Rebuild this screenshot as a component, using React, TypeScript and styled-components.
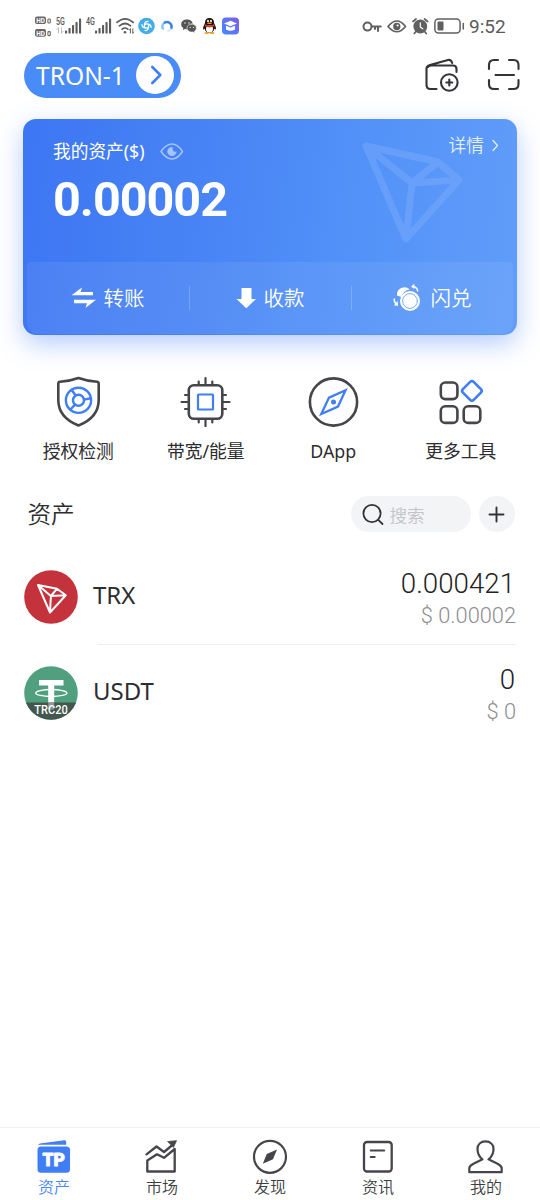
import React from 'react';
import styled, { createGlobalStyle } from 'styled-components';

const Global = createGlobalStyle`
  * { box-sizing: border-box; }
  body { margin: 0; background: #fff; }
  svg { display: block; flex: none; }
`;

const cjk = `"Noto Sans", "Noto Sans CJK SC", sans-serif`;
const digits = `Roboto, "Noto Sans CJK SC", sans-serif`;
const ink = '#45464a';
const blue = '#3f7ef5';

const Screen = styled.div`
  width: 540px;
  height: 1200px;
  display: flex;
  flex-direction: column;
  background: #fff;
  color: #2c2d30;
  font-family: ${cjk};
  font-weight: 350;
  overflow: hidden;
`;

const StatusBar = styled.div`
  height: 52px;
  padding: 0 35px 0 34px;
  display: flex;
  justify-content: space-between;
  align-items: center;
`;

const StatusGroup = styled.div<{ $gap: number }>`
  display: flex;
  align-items: center;
  gap: ${p => p.$gap}px;
`;

const Clock = styled.span`
  font: 400 19px/24px ${digits};
  margin-left: -1px;
  padding-top: 1px;
  color: #5a5a5a;
  width: 36px;
  white-space: nowrap;
`;

const Header = styled.header`
  height: 46px;
  padding: 0 19px 0 24px;
  display: flex;
  justify-content: space-between;
  align-items: center;
`;

const WalletPill = styled.button`
  width: 157px;
  height: 45px;
  border: 0;
  border-radius: 23px;
  background: #4a8cf7;
  padding: 0 7px 0 12px;
  display: flex;
  align-items: center;
  justify-content: space-between;
  color: #fff;
  font: 400 24.6px/43px "Noto Sans", sans-serif;
  white-space: nowrap;
`;

const HeaderIcons = styled.div`
  display: flex;
  align-items: center;
  gap: 27px;
`;

const Card = styled.section`
  margin: 21px 23px 0;
  height: 216px;
  flex: none;
  border-radius: 13px;
  background: linear-gradient(97deg, #3d76f3 0%, #4a86f5 42%, #5090f8 62%, #619df9 100%);
  box-shadow: 0 9px 26px rgba(84, 136, 246, 0.42);
  display: flex;
  flex-direction: column;
  justify-content: space-between;
  position: relative;
  color: #fff;
`;

const Watermark = styled.svg`
  position: absolute;
  left: 337px;
  top: 21px;
`;

const CardTop = styled.div`
  padding: 17px 18px 0 30px;
  display: flex;
  justify-content: space-between;
  align-items: flex-start;
`;

const Balance = styled.div`
  display: flex;
  flex-direction: column;
`;

const BalanceLabel = styled.div`
  height: 30px;
  display: flex;
  align-items: center;
  gap: 16px;
  font-size: 17.7px;
  font-weight: 400;
  line-height: 30px;
`;

const Amount = styled.div`
  font: 700 48.5px/58px ${digits};
  letter-spacing: -1px;
  margin-top: 5px;
`;

const Details = styled.div`
  display: flex;
  align-items: center;
  gap: 7px;
  font-size: 17.7px;
  line-height: 18px;
  opacity: 0.85;
`;

const Actions = styled.div`
  height: 72px;
  margin: 0 4px 1px;
  border-radius: 3px 3px 11px 11px;
  background: rgba(255, 255, 255, 0.07);
  display: grid;
  grid-template-columns: repeat(3, 1fr);
  align-items: center;
`;

const Action = styled.div<{ $gap: number }>`
  height: 24px;
  display: flex;
  align-items: center;
  justify-content: center;
  gap: ${p => p.$gap}px;
  padding-right: 1px;
  font-size: 20.5px;
  line-height: 24px;
  & + & { border-left: 1px solid rgba(255, 255, 255, 0.2); }
`;

const Tools = styled.section`
  margin: 41px 15.5px 0 14.5px;
  display: grid;
  grid-template-columns: repeat(4, 1fr);
`;

const Tool = styled.div`
  display: flex;
  flex-direction: column;
  align-items: center;
  gap: 11px;
  font-size: 17.8px;
  font-weight: 400;
  line-height: 26px;
`;

const AssetBar = styled.div`
  margin: 32px 25.5px 0 27.5px;
  height: 36px;
  display: flex;
  align-items: center;
  gap: 8px;
`;

const AssetTitle = styled.h2`
  margin: 0 auto 0 0;
  font-size: 23.6px;
  font-weight: 350;
  line-height: 36px;
`;

const Search = styled.div`
  width: 120px;
  height: 36px;
  border-radius: 18px;
  background: #f3f4f6;
  padding-left: 11px;
  display: flex;
  align-items: center;
  gap: 5px;
  font-size: 17.6px;
  color: #c3c4c7;
`;

const AddButton = styled.div`
  width: 36px;
  height: 36px;
  border-radius: 50%;
  background: #f3f4f6;
  display: grid;
  place-items: center;
`;

const AssetList = styled.div`
  margin-top: 17px;
  flex: 1;
`;

const AssetRow = styled.div`
  height: 96px;
  padding-left: 24px;
  display: flex;
  align-items: center;
  gap: 15px;
`;

const AssetName = styled.div`
  flex: 1;
  font-size: 24px;
  font-weight: 400;
  line-height: 30px;
  padding-bottom: 4px;
`;

const AssetValues = styled.div`
  padding: 3px 24px 0 0;
  display: flex;
  flex-direction: column;
  align-items: flex-end;
  font-family: ${digits};
`;

const Quantity = styled.div`
  font-size: 27.7px;
  line-height: 33px;
  padding-right: 1px;
  color: #222326;
`;

const Fiat = styled.div`
  font-size: 21.8px;
  line-height: 31px;
  color: #8c8d90;
`;

const Divider = styled.div`
  height: 1px;
  margin: -1px 24px 0 98px;
  background: #efeff0;
`;

const TabBar = styled.nav`
  height: 73px;
  border-top: 1px solid #efeff0;
  display: grid;
  grid-template-columns: repeat(5, 1fr);
`;

const Tab = styled.div<{ $active?: boolean }>`
  padding-top: 10px;
  display: flex;
  flex-direction: column;
  align-items: center;
  gap: 1px;
  font-size: 16px;
  line-height: 24px;
  color: ${p => (p.$active ? '#4a86f5' : '#3d3e42')};
`;

type DrawingProps = { box: [number, number, number, number]; color?: string; width?: number; children: React.ReactNode };

const Drawing = ({ box, color = ink, width = 2, children }: DrawingProps) => (
  <svg
    width={box[2]}
    height={box[3]}
    viewBox={box.join(' ')}
    fill="none"
    stroke={color}
    strokeWidth={width}
    strokeLinecap="round"
    strokeLinejoin="round"
  >
    {children}
  </svg>
);

const HdIcon = () => (
  <Drawing box={[34, 16, 17, 21]} color="none">
    {[0, 12.6].map(dy => (
      <g key={dy} transform={`translate(0 ${dy})`}>
        <rect x="35" y="16.5" width="11" height="7.6" rx="2" fill="#666" />
        <text x="36.3" y="23" fontSize="7.5" fontWeight="700" fontFamily="Roboto, sans-serif" fill="#fff" textLength="8.6" lengthAdjust="spacingAndGlyphs">HD</text>
        <rect x="47.9" y="19" width="2.4" height="4" rx=".8" stroke="#666" strokeWidth="1.1" />
      </g>
    ))}
  </Drawing>
);

const SignalIcon = ({ label, left, data }: { label: string; left: number; data?: boolean }) => (
  <Drawing box={[left, 16, 82 - left, 20]} color="none">
    <text x="56" y="25.2" fontSize="10" fontWeight="500" fontFamily="Roboto, sans-serif" fill="#555" textLength="8.8" lengthAdjust="spacingAndGlyphs">{label}</text>
    {data && <path d="M58.5 28v5m-1.6-3.4 1.6-1.6M61.5 28v5m1.6-1.6L61.5 33" stroke="#bbb" strokeWidth="1" />}
    {[3, 5.5, 8.5, 11.5, 15].map((h, i) => (
      <rect key={h} x={65 + i * 3.5} y={33.6 - h} width="2.1" height={h} rx=".6" fill="#5c5c5c" />
    ))}
  </Drawing>
);

const WifiIcon = () => (
  <Drawing box={[116, 17, 18, 18]} color="#5c5c5c" width={1.7}>
    <path d="M117 22.4q8.2-7.2 16.2 0M119.4 25.8q5.6-4.6 11.2 0M122.2 29.1q2.8-2.2 5.6 0" />
    <circle cx="125" cy="32.2" r="1.3" fill="#5c5c5c" stroke="none" />
    <path d="M130.4 29v4m-1-3 1-1M132.8 29v4m1-1-1 1" strokeWidth="1" />
  </Drawing>
);

const SwirlAppIcon = () => (
  <Drawing box={[138, 17, 17, 18]} color="#fff" width={1.2}>
    <circle cx="146.5" cy="26" r="8.3" fill="#43aee6" stroke="none" />
    <path d="M144.500 26q0-2.200 2-2.200 4.500 0 4.600 3.600M146.500 24q2.200 0 2.200 2 0 4.500-3.600 4.600M148.500 26q0 2.200-2 2.200-4.500 0-4.600-3.600M146.500 28q-2.200 0-2.200-2 0-4.500 3.600-4.600" />
  </Drawing>
);

const RingAppIcon = () => (
  <Drawing box={[159, 18, 16, 15]} color="#3d7fe4" width={2.5}>
    <path d="M162.8 27.5a4.7 4.7 0 0 1 2-6" stroke="#86c4f5" />
    <path d="M164.8 21.5a4.7 4.7 0 0 1 6.6 5.5" />
    <path d="M170.8 28.4a4.7 4.7 0 0 1-2.8 1.6" stroke="#d3e6fb" strokeWidth="1.8" />
  </Drawing>
);

const ChatAppIcon = () => (
  <Drawing box={[179, 18, 19, 16]} color="none">
    <path d="M187 19.5c-3.4 0-5.8 2-5.8 4.7 0 1.6.8 2.9 2.1 3.8l-.5 2 2.2-1.1c2 .6 4 .3 5.4-.8 1.5-1.1 2.3-2.4 2.3-3.9 0-2.7-2.4-4.7-5.7-4.7z" fill="#555" />
    <path d="M191.8 24c-2.8 0-4.8 1.8-4.8 4.1 0 2.7 2.8 4.6 6.1 3.8l1.8 1-.4-1.7c1.2-.8 1.9-1.9 1.9-3.1 0-2.3-2-4.1-4.6-4.1z" fill="#555" stroke="#fff" strokeWidth=".6" />
    <g fill="#fff"><circle cx="185" cy="23" r=".7" /><circle cx="189" cy="23" r=".7" /><circle cx="190.2" cy="27.3" r=".6" /><circle cx="193.5" cy="27.3" r=".6" /></g>
  </Drawing>
);

const PenguinAppIcon = () => (
  <Drawing box={[202, 17, 15, 18]} color="none">
    <path d="M209.5 18c-3 0-4.5 2-4.5 4.8 0 1.3-2 3.3-2 6 0 1.2.9.8 1.6-.4.5 3 2.3 4.4 4.9 4.4s4.4-1.4 4.9-4.4c.7 1.2 1.6 1.6 1.6.4 0-2.7-2-4.7-2-6 0-2.8-1.5-4.8-4.5-4.8z" fill="#171310" />
    <ellipse cx="209.5" cy="29" rx="3.5" ry="3.5" fill="#fff" />
    <path d="M204.8 24.3q4.7 2.4 9.4 0l.2 2q-4.7 2.2-9.8 0z" fill="#e83a2c" />
    <ellipse cx="208" cy="21" rx=".9" ry="1.3" fill="#fff" /><ellipse cx="211" cy="21" rx=".9" ry="1.3" fill="#fff" />
    <ellipse cx="209.5" cy="23.3" rx="2.5" ry=".8" fill="#f4a01f" />
    <ellipse cx="206.8" cy="33" rx="2.4" ry="1" fill="#f4a01f" /><ellipse cx="212.2" cy="33" rx="2.4" ry="1" fill="#f4a01f" />
  </Drawing>
);

const SchoolAppIcon = () => (
  <Drawing box={[221, 17, 18, 18]} color="none">
    <defs>
      <linearGradient id="school" x1="0" y1="1" x2="1" y2="0"><stop offset="0" stopColor="#3f8bfb" /><stop offset="1" stopColor="#7f5cf0" /></linearGradient>
    </defs>
    <rect x="222" y="17.5" width="17" height="17" rx="4" fill="url(#school)" />
    <path d="m230.5 20.8 6.5 2.7-6.5 2.7-6.5-2.7zM226 25.7l4.5 1.9 4.5-1.9v3.7q-4.5 2.6-9 0z" fill="#fff" />
  </Drawing>
);

const tools = [
  {
    label: '授权检测',
    icon: (
      <Drawing box={[53, 376, 51, 51]} width={2.6}>
        <path d="M78.5 378q-9.5 3.4-18.5 3.7-1.7.2-1.7 2v16.3q0 17.5 20.2 25.5 20.2-8 20.2-25.5v-16.3q0-1.8-1.7-2-9-.3-18.5-3.7z" />
        <g stroke={blue} strokeWidth="2.4"><circle cx="78.5" cy="400.3" r="12.6" /><circle cx="78.5" cy="400.3" r="5.5" /><path d="m75.7 395.5-4-5.5M84 399.6l6.8-1.3M75 404.6l-4.6 4.9" /></g>
      </Drawing>
    ),
  },
  {
    label: '带宽/能量',
    icon: (
      <Drawing box={[180.5, 376, 51, 51]} width={2.6}>
        <rect x="189.3" y="385.3" width="33.5" height="33.5" rx="5" />
        <path d="M206 384v-6M199.2 384v-2.5M212.8 384v-2.5M206 420v6M199.2 420v2.5M212.8 420v2.5M188 402h-6M188 395h-2.5M188 409h-2.5M224 402h6M224 395h2.5M224 409h2.5" strokeWidth="2.2" />
        <rect x="198.5" y="394.5" width="15" height="15" stroke={blue} strokeWidth="2.2" rx=".5" />
      </Drawing>
    ),
  },
  {
    label: 'DApp',
    icon: (
      <Drawing box={[308, 376, 51, 51]} width={2.6}>
        <circle cx="333.5" cy="402" r="23.6" />
        <path d="M345.5 390.2 329 397.6 321.3 414 338 406.6Z" stroke={blue} strokeWidth="2.3" strokeLinejoin="miter" />
        <circle cx="333.5" cy="402" r="2.5" fill={blue} stroke="none" />
      </Drawing>
    ),
  },
  {
    label: '更多工具',
    icon: (
      <Drawing box={[435.5, 376, 51, 51]} width={2.6}>
        <rect x="441.3" y="382.5" width="16.6" height="16.6" rx="4.5" /><rect x="441.3" y="406.3" width="16.6" height="16.6" rx="4.5" /><rect x="464.2" y="406.3" width="16.6" height="16.6" rx="4.5" />
        <rect x="464.8" y="383.3" width="15.2" height="15.2" rx="2.5" transform="rotate(45 472.4 390.9)" stroke={blue} />
      </Drawing>
    ),
  },
];

const tabs = [
  {
    label: '资产',
    icon: (
      <Drawing box={[36, 1138, 36, 36]} color="none">
        <path d="M38 1145.8q0-2 2-2.3l24.5-3.3q1.700-.2 1.700 1.500v3.100H38z" fill={blue} />
        <rect x="37.5" y="1146.6" width="32.5" height="26.2" rx="3.5" fill={blue} />
        <text x="42.5" y="1166" fontSize="17.5" fontWeight="900" fontFamily="Roboto, sans-serif" fill="#fff" stroke="#fff" strokeWidth=".8" textLength="22.5" lengthAdjust="spacingAndGlyphs">TP</text>
      </Drawing>
    ),
  },
  {
    label: '市场',
    icon: (
      <Drawing box={[144, 1138, 36, 36]} width={2.3}>
        <path d="M147.3 1171.5V1160.5L157 1154.3l7 3.5 10.7-8.8v22.5z" />
        <path d="M146.5 1154.3 156.5 1146.5l7.5 5.5 9-7.5" />
        <path d="m168 1141.5 8.5-.8-3 6.5z" fill={ink} strokeWidth=".8" />
      </Drawing>
    ),
  },
  {
    label: '发现',
    icon: (
      <Drawing box={[252, 1138, 36, 36]} width={2.2}>
        <circle cx="270" cy="1156.8" r="16" />
        <path d="m277 1149.5-10.2 4.5-4 9.8 10.2-4.5z" fill={ink} stroke="none" />
      </Drawing>
    ),
  },
  {
    label: '资讯',
    icon: (
      <Drawing box={[360, 1138, 36, 36]} width={2.3}>
        <rect x="364" y="1142" width="27.7" height="29.5" rx="3" />
        <path d="M370.7 1150.6h13.5M370.7 1157h4" strokeWidth="2" />
      </Drawing>
    ),
  },
  {
    label: '我的',
    icon: (
      <Drawing box={[468, 1138, 36, 36]} width={2.2}>
        <path d="M482.5 1159.3c-3.5-2.5-5-5-5-10.3 0-4.7 3.3-7.6 8-7.6s8 2.9 8 7.6c0 5.3-1.5 7.8-5 10.3l9.5 4.7q3.700 2 3.700 4.200v4h-32.400v-4q0-2.200 3.700-4.200z" />
      </Drawing>
    ),
  },
];

const assets = [
  {
    name: 'TRX',
    quantity: '0.000421',
    fiat: '$ 0.00002',
    icon: (
      <Drawing box={[24, 570, 54, 54]} color="#fff" width={2}>
        <circle cx="51" cy="597" r="26.8" fill="#c4323c" stroke="none" />
        <path d="M38 585 57 588.8 65.8 595.3 50 612.5ZM38 585 50.9 596 50 612.5M50.9 596 57 588.8M50.9 596 65.8 595.3" />
      </Drawing>
    ),
  },
  {
    name: 'USDT',
    quantity: '0',
    fiat: '$ 0',
    icon: (
      <Drawing box={[24, 666, 54, 54]} color="none">
        <defs><clipPath id="coin"><circle cx="51" cy="693" r="26.8" /></clipPath></defs>
        <g clipPath="url(#coin)">
          <rect x="24" y="666" width="54" height="54" fill="#50a07f" />
          <path d="M39 680h24.5v5.5h-9.3V704h-6v-18.5H39z" fill="#fff" />
          <ellipse cx="51.3" cy="693" rx="15.6" ry="3.5" stroke="#fff" strokeWidth="1.3" />
          <rect x="24" y="702.5" width="54" height="18" fill="#43574f" />
          <rect x="48.2" y="702.5" width="6" height="7" fill="#8b9893" />
        </g>
        <text x="34.3" y="713.5" fontSize="13" fontWeight="500" fontFamily="Roboto, sans-serif" fill="#fff" textLength="33.5" lengthAdjust="spacingAndGlyphs">TRC20</text>
      </Drawing>
    ),
  },
];

export default function App() {
  return (
    <Screen>
      <Global />
      <StatusBar>
        <StatusGroup $gap={4}>
          <HdIcon />
          <SignalIcon label="5G" left={55} data />
          <SignalIcon label="4G" left={56} />
          <WifiIcon />
          <SwirlAppIcon />
          <RingAppIcon />
          <ChatAppIcon />
          <PenguinAppIcon />
          <SchoolAppIcon />
        </StatusGroup>
        <StatusGroup $gap={5}>
          <Drawing box={[362, 18, 20, 17]} color="#606060">
            <circle cx="367.5" cy="26.6" r="4" />
            <path d="M371.7 26.6h9M378 27v4M375 27v2" />
          </Drawing>
          <Drawing box={[387, 18, 20, 17]} color="#606060" width={1.7}>
            <path d="M388 26.5q9-11 17.5 0-8.5 10.5-17.5 0z" /><circle cx="396.8" cy="26.5" r="2.8" fill="#606060" /><circle cx="397.6" cy="25.5" r="1" fill="#fff" stroke="none" />
          </Drawing>
          <Drawing box={[412, 18, 17, 17]} color="#606060" width={1.7}>
            <circle cx="420.3" cy="26.5" r="6.9" fill="#606060" stroke="none" />
            <path d="m413 21.5 3-2.5M427.6 21.5l-3-2.5M415.5 32l-1.2 1.5M425 32l1.2 1.5" /><path d="M420.3 22.8v4.2l2.5 1.8" stroke="#fff" strokeWidth="1.2" />
          </Drawing>
          <Drawing box={[434, 18, 31, 17]} color="#606060" width={1.5}>
            <rect x="434.9" y="19" width="25.2" height="14" rx="3.5" /><rect x="437.5" y="21.5" width="6" height="9" rx="1" fill="#606060" stroke="none" /><path d="M463.3 23.5v5.5" />
          </Drawing>
          <Clock>9:52</Clock>
        </StatusGroup>
      </StatusBar>

      <Header>
        <WalletPill>
          TRON-1
          <Drawing box={[135.5, 56, 38, 38]} color={blue} width={2.6}>
            <circle cx="154.5" cy="75" r="19" fill="#fff" stroke="none" />
            <path d="m151.8 67 8 8-8 8" />
          </Drawing>
        </WalletPill>
        <HeaderIcons>
          <Drawing box={[424, 57, 36, 36]} color="#333438" width={2.1}>
            <path d="M436.5 89h-6q-4 0-4-4V68.5q0-2.5 3.5-3.5l18-5q3-.8 4.2 3M428 67q1-1.5 4-1.5h21q3.5 0 3.5 3.5v3" /><circle cx="449.3" cy="82.5" r="8.3" /><path d="M449.3 79.5v6M446.3 82.5h6" />
          </Drawing>
          <Drawing box={[487, 57, 34, 36]} color="#333438" width={2.1}>
            <path d="M489 69v-4q0-5 5-5h4M509 60h4.5q5 0 5 5v4M518.5 80v4q0 5-5 5H509M498 89h-4q-5 0-5-5v-4M495.5 75h18.5" />
          </Drawing>
        </HeaderIcons>
      </Header>

      <Card>
        <Watermark width="106" height="104" viewBox="360 140 106 104" fill="none" stroke="#78a9fb" strokeOpacity=".5" strokeWidth="7" strokeLinejoin="round">
          <path d="M366 146 438 162 459 180 406 239ZM366 146 412 183 406 239M412 183 438 162M412 183 459 180" />
        </Watermark>
        <CardTop>
          <Balance>
            <BalanceLabel>
              我的资产($)
              <Drawing box={[161, 142, 24, 19]} color="#a5c4fb" width={1.5}>
                <path d="M162 151.5c7-10 15-10 21.5 0-6.5 10-14.5 10-21.5 0z" /><path d="M173.5 147a4.6 4.6 0 1 0 4 4.5q-4.2 1.5-4-4.5z" fill="#a5c4fb" stroke="none" />
              </Drawing>
            </BalanceLabel>
            <Amount>0.00002</Amount>
          </Balance>
          <Details>
            详情
            <Drawing box={[491, 138, 8, 13]} color="#fff" width={1.2}><path d="m493 139.5 4.500 5-4.500 5" /></Drawing>
          </Details>
        </CardTop>
        <Actions>
          <Action $gap={8}>
            <Drawing box={[70, 286, 25, 24]} color="none">
              <path d="M70.5 295.3 81 287.5l-1.3 4.5H92v3.3zM95 299.8 84.5 308l1.5-4.7H73v-3.5z" fill="#fff" />
            </Drawing>
            转账
          </Action>
          <Action $gap={8}>
            <Drawing box={[235, 286, 20, 24]} color="none"><path d="M240.5 288h10v11h4.5l-9.7 9.3-9.8-9.3h5z" fill="#fff" /></Drawing>
            收款
          </Action>
          <Action $gap={10}>
            <Drawing box={[394, 283, 28, 30]} color="#fff" width={1.5}>
              <path d="M398 295.5a7.5 7.5 0 0 1 12.8-6q-6.8 1-8.5 7.5z" fill="#fff" stroke="none" />
              <circle cx="411" cy="301" r="10" fill="#fff" stroke="none" /><circle cx="411" cy="301" r="7.4" stroke="#6da3f9" strokeWidth=".9" />
              <path d="M414 286.5q4.3.7 4.7 4.5M395.3 299q-.3 3.5 2.3 5" />
              <path d="M415.3 283.8v5.2l-3.3-2.6zM398.7 301l.3 5-4-.8z" fill="#fff" stroke="none" />
            </Drawing>
            闪兑
          </Action>
        </Actions>
      </Card>

      <Tools>
        {tools.map(t => (
          <Tool key={t.label}>{t.icon}{t.label}</Tool>
        ))}
      </Tools>

      <AssetBar>
        <AssetTitle>资产</AssetTitle>
        <Search>
          <Drawing box={[362, 503, 23, 23]} color="#333438" width={1.8}>
            <circle cx="372" cy="513.5" r="8.6" /><path d="m378.3 519.8 4.2 4.2" />
          </Drawing>
          搜索
        </Search>
        <AddButton>
          <Drawing box={[488, 506, 17, 17]} color="#333438" width={1.9}><path d="M496.5 507.5v14M489.5 514.5h14" /></Drawing>
        </AddButton>
      </AssetBar>

      <AssetList>
        {assets.map((a, i) => (
          <React.Fragment key={a.name}>
            {i > 0 && <Divider />}
            <AssetRow>
              {a.icon}
              <AssetName>{a.name}</AssetName>
              <AssetValues>
                <Quantity>{a.quantity}</Quantity>
                <Fiat>{a.fiat}</Fiat>
              </AssetValues>
            </AssetRow>
          </React.Fragment>
        ))}
      </AssetList>

      <TabBar>
        {tabs.map((t, i) => (
          <Tab key={t.label} $active={i === 0}>{t.icon}{t.label}</Tab>
        ))}
      </TabBar>
    </Screen>
  );
}
